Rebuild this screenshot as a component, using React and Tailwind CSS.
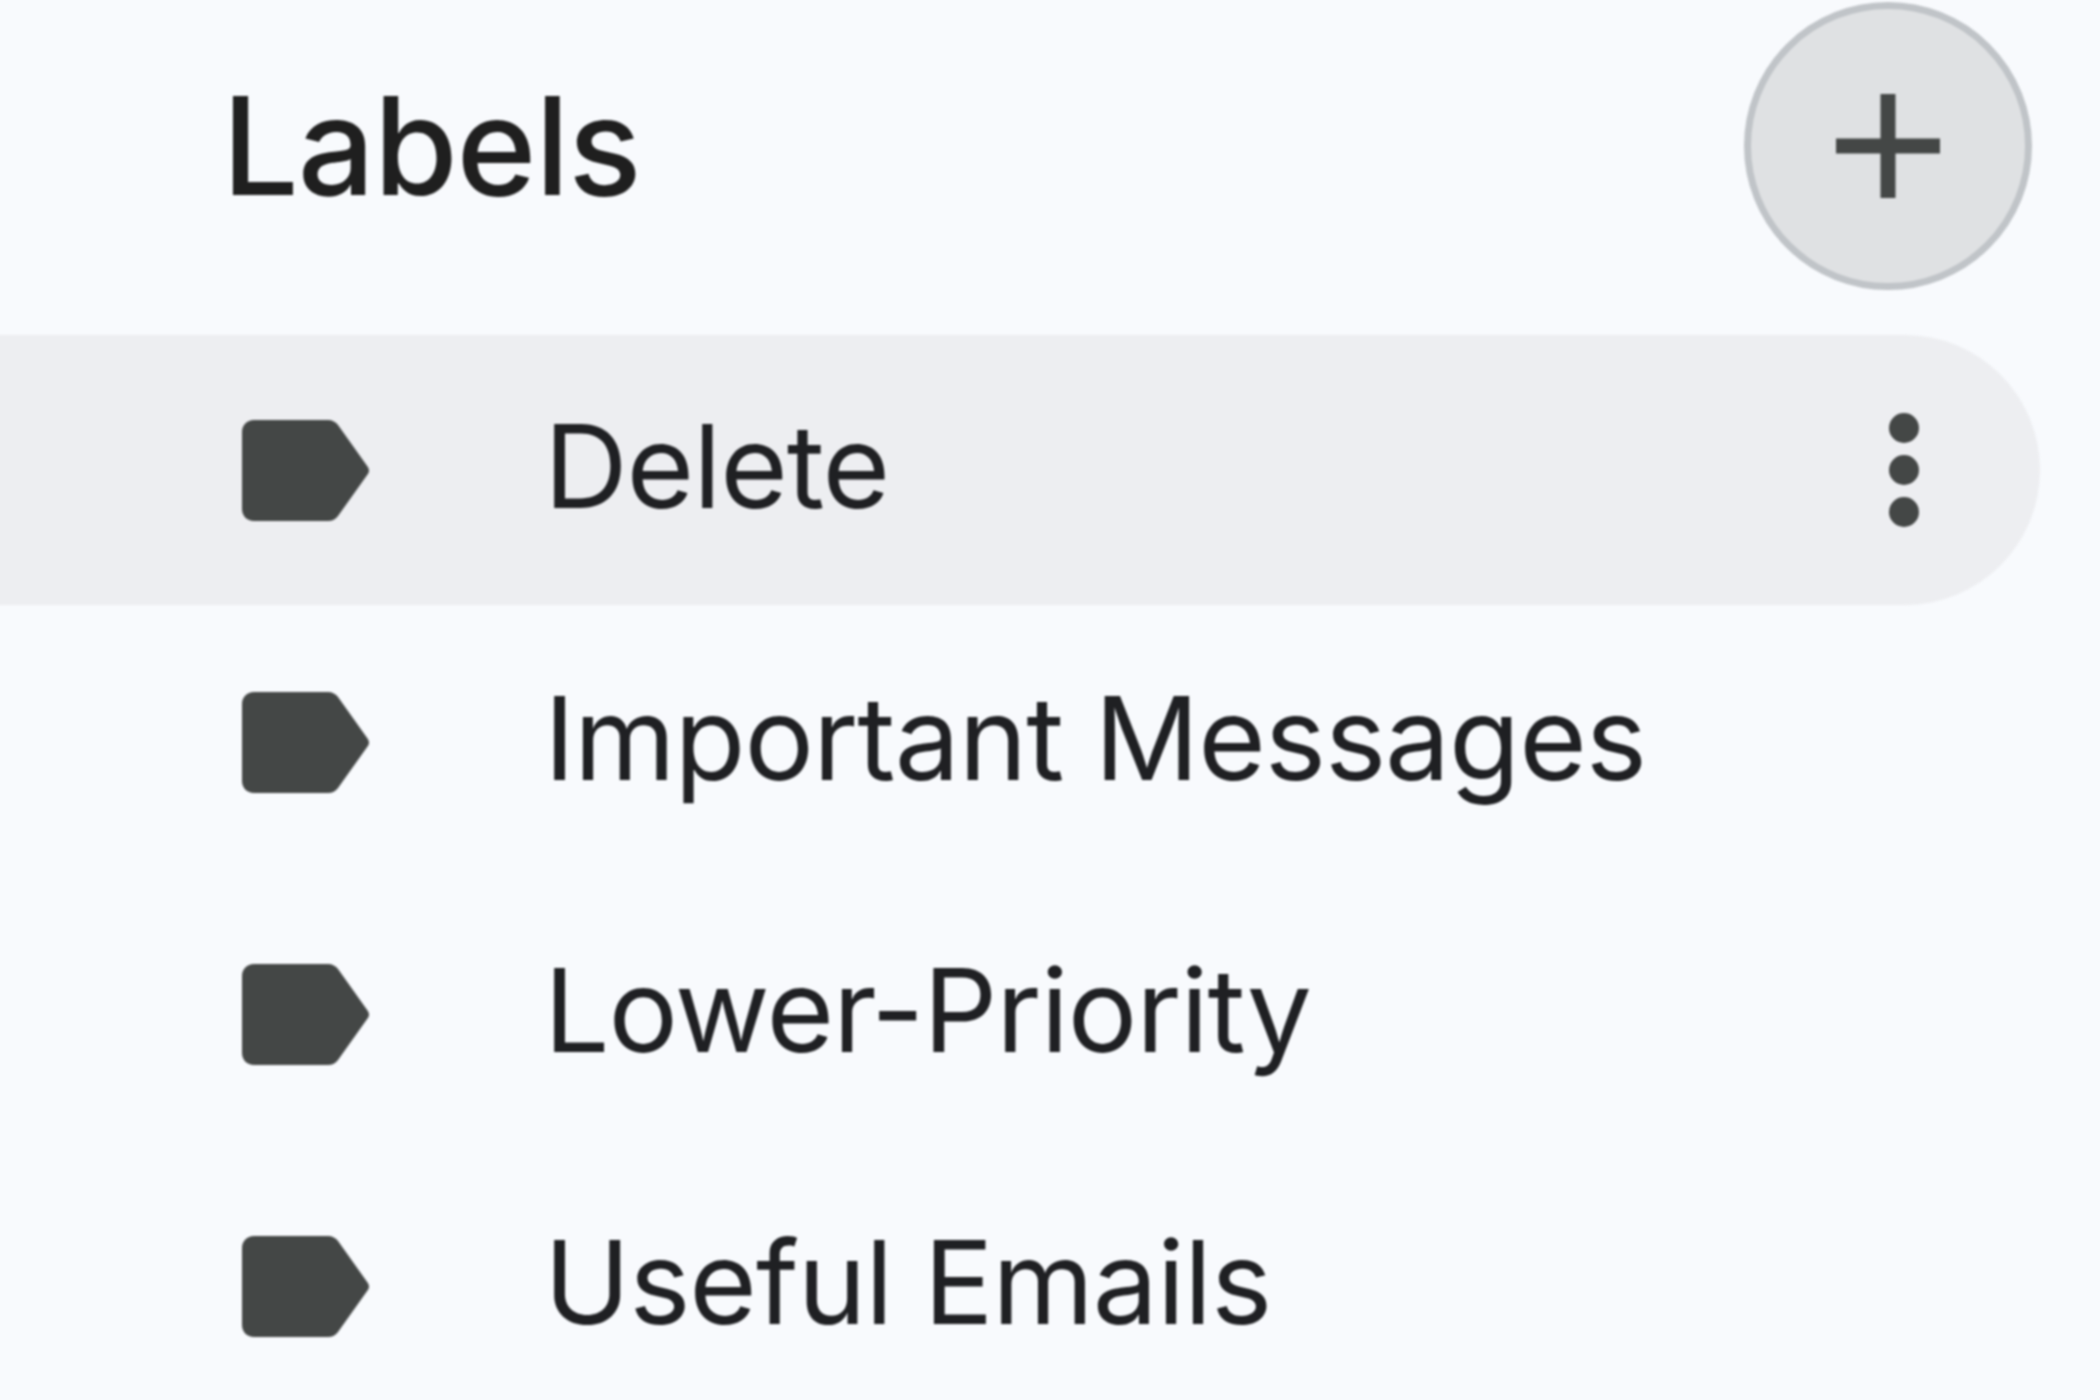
export default function App() {
  const rows = ["Delete", "Important Messages", "Lower-Priority", "Useful Emails"];
  return (
    <div className="w-[2100px] h-[1400px] overflow-hidden bg-[#f8fafd]">
      <div className="h-full flex flex-col font-['Inter',sans-serif] blur-[1px]">
        <div className="flex items-center justify-between h-[288px] mt-[2px] mb-[45px] pl-[222px] pr-[68px] shrink-0">
          <span className="text-[136px] leading-none font-medium text-[#1f1f1f] tracking-[-1.2px]">Labels</span>
          <button className="w-[288px] h-[288px] rounded-full bg-[#dfe1e3] border-[7px] border-[#c0c4c8] flex items-center justify-center">
            <svg width="104" height="104" viewBox="0 0 104 104" className="block">
              <path d="M44.5 0h15v44.5h44.5v15H59.5v44.5h-15V59.5H0v-15h44.5z" fill="#444746" />
            </svg>
          </button>
        </div>
        <div className="flex flex-col gap-[2px]">
          {rows.map((label, i) => (
            <div key={label} className={`-ml-[8px] w-[2048px] h-[270px] shrink-0 rounded-r-full flex items-center pl-[250px] ${i === 0 ? "bg-[#edeef1]" : ""}`}>
              <svg width="128" height="101" viewBox="0 0 128 101" className="block shrink-0">
                <path d="M12 0H86C90 0 94 2 96 5L125.500 46.500C127.500 49 127.500 52 125.500 54.500L96 96C94 99 90 101 86 101H12C5 101 0 96 0 89V12C0 5 5 0 12 0Z" fill="#444746" />
              </svg>
              <span className="ml-[174px] mb-[8px] text-[116px] leading-none tracking-[-1.1px] text-[#1f2023] whitespace-nowrap">{label}</span>
              {i === 0 && (
                <span className="ml-auto mr-[121px] flex flex-col gap-[12px]">
                  <i className="block w-[30px] h-[30px] rounded-full bg-[#444746]" />
                  <i className="block w-[30px] h-[30px] rounded-full bg-[#444746]" />
                  <i className="block w-[30px] h-[30px] rounded-full bg-[#444746]" />
                </span>
              )}
            </div>
          ))}
        </div>
      </div>
    </div>
  );
}
